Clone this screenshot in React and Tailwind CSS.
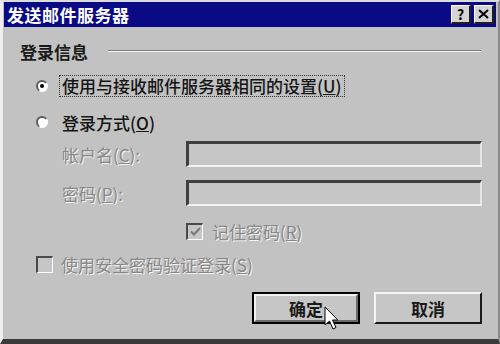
import React from "react";

const font = { fontFamily: '"Noto Sans CJK SC", "Liberation Sans", sans-serif' };

// greyed-out label text, Win9x etched look
const Dim = ({ children, className = "" }) => (
  <span className={`text-[#878787] [text-shadow:1px_1px_0_#f4f4f4] ${className}`}>{children}</span>
);

const Radio = ({ checked }) => (
  <span className="relative block w-[12px] h-[12px] rounded-full bg-white border-t-2 border-l-2 border-[#5a5a5a] border-b border-r border-b-white border-r-white">
    {checked && <span className="absolute left-[2px] top-[2px] w-[4px] h-[4px] rounded-full bg-black" />}
  </span>
);

const Check = ({ checked }) => (
  <span className="flex items-center justify-center w-[17px] h-[17px] bg-[#c6c6c6] border-t-2 border-l-2 border-[#4a4a4a] border-b border-r border-b-white border-r-white">
    {checked && (
      <svg width="11" height="10" viewBox="0 0 11 10">
        <path d="M1 4.5 L4 7.5 L10 1" stroke="#7a7a7a" strokeWidth="2" fill="none" />
      </svg>
    )}
  </span>
);

const Field = () => (
  <div className="w-[296px] h-[26px] bg-[#c6c6c6] border-t-[3px] border-l-[3px] border-[#3f3f3f] border-b-2 border-r-2 border-b-[#f2f2f2] border-r-[#e6e6e6]" />
);

export default function App() {
  return (
    <div style={font} className="w-[500px] h-[344px] bg-[#c2c2c2] overflow-hidden relative">
      <div className="flex flex-col h-full border-l-[3px] border-l-[#efefef] border-t-2 border-t-[#dcdcdc] border-b-[5px] border-b-[#3a3a3a] border-r-2 border-r-[#8a8a8a]">
        {/* title bar */}
        <div className="ml-[1px] mr-[2px] h-[25px] bg-[#0a0a84] flex items-center justify-between pl-[3px] pr-[2px]">
          <span className="text-white text-[17px] font-bold leading-none tracking-[0.5px]">发送邮件服务器</span>
          <div className="flex gap-[3px]">
            <span className="w-[20px] h-[19px] bg-[#d4d4d4] border-t border-l border-white border-b-2 border-r-2 border-b-[#202020] border-r-[#202020] flex items-center justify-center text-[14px] font-bold leading-none text-black">?</span>
            <span className="w-[20px] h-[19px] bg-[#d4d4d4] border-t border-l border-white border-b-2 border-r-2 border-b-[#202020] border-r-[#202020] flex items-center justify-center">
              <svg width="11" height="10" viewBox="0 0 11 10">
                <path d="M1 1 L10 9 M10 1 L1 9" stroke="#000" strokeWidth="2" />
              </svg>
            </span>
          </div>
        </div>

        {/* group header */}
        <div className="mt-[12px] h-[24px] flex items-center pl-[17px] pr-[17px]">
          <span className="text-[17px] font-semibold text-[#1a1a1a] leading-none">登录信息</span>
          <div className="ml-[20px] flex-1 border-t border-t-[#7c7c7c] border-b border-b-[#f6f6f6]" />
        </div>

        {/* radio 1 */}
        <div className="mt-[12px] h-[22px] flex items-center pl-[33px]">
          <Radio checked />
          <span className="ml-[11px] px-[2px] border border-dotted border-[#333] text-[17px] leading-[20px] text-[#151515] font-medium">
            使用与接收邮件服务器相同的设置(<span className="underline">U</span>)
          </span>
        </div>

        {/* radio 2 */}
        <div className="mt-[14px] h-[22px] flex items-center pl-[33px]">
          <Radio />
          <span className="ml-[14px] text-[17px] leading-none text-[#151515] font-medium">
            登录方式(<span className="underline">O</span>)
          </span>
        </div>

        {/* account */}
        <div className="mt-[8px] flex items-center pl-[59px]">
          <Dim className="w-[124px] text-[17px] leading-none">帐户名(<span className="underline">C</span>):</Dim>
          <Field />
        </div>

        {/* password */}
        <div className="mt-[13px] flex items-center pl-[59px]">
          <Dim className="w-[124px] text-[17px] leading-none">密码(<span className="underline">P</span>):</Dim>
          <Field />
        </div>

        {/* remember */}
        <div className="mt-[16px] h-[19px] flex items-center pl-[183px]">
          <Check checked />
          <Dim className="ml-[9px] text-[17px] leading-none">记住密码(<span className="underline">R</span>)</Dim>
        </div>

        {/* secure */}
        <div className="mt-[14px] h-[18px] flex items-center pl-[33px]">
          <Check />
          <Dim className="ml-[8px] text-[17px] leading-none">使用安全密码验证登录(<span className="underline">S</span>)</Dim>
        </div>

        {/* buttons */}
        <div className="mt-[19px] flex justify-end gap-[14px] pr-[16px]">
          <button className="w-[108px] h-[32px] bg-[#c6c6c6] border-2 border-black text-[17px] font-semibold text-[#1a1a1a] leading-none">
            <span className="flex items-center justify-center w-full h-full border-t-2 border-l-2 border-[#f2f2f2] border-b-2 border-r-2 border-b-[#6a6a6a] border-r-[#6a6a6a]">确定</span>
          </button>
          <button className="w-[108px] h-[32px] bg-[#c6c6c6] border-t-2 border-l-2 border-[#f4f4f4] border-b-2 border-r-2 border-b-[#1a1a1a] border-r-[#1a1a1a] text-[17px] font-semibold text-[#1a1a1a] leading-none">
            取消
          </button>
        </div>
      </div>

      {/* mouse pointer */}
      <svg className="absolute left-[324px] top-[306px]" width="16" height="27" viewBox="0 0 16 27">
        <path d="M1 1 L1 19 L5.5 15 L9 23 L12 21.5 L8.5 14 L14 14 Z" fill="#ffffff" stroke="#000" strokeWidth="1" />
      </svg>
    </div>
  );
}
